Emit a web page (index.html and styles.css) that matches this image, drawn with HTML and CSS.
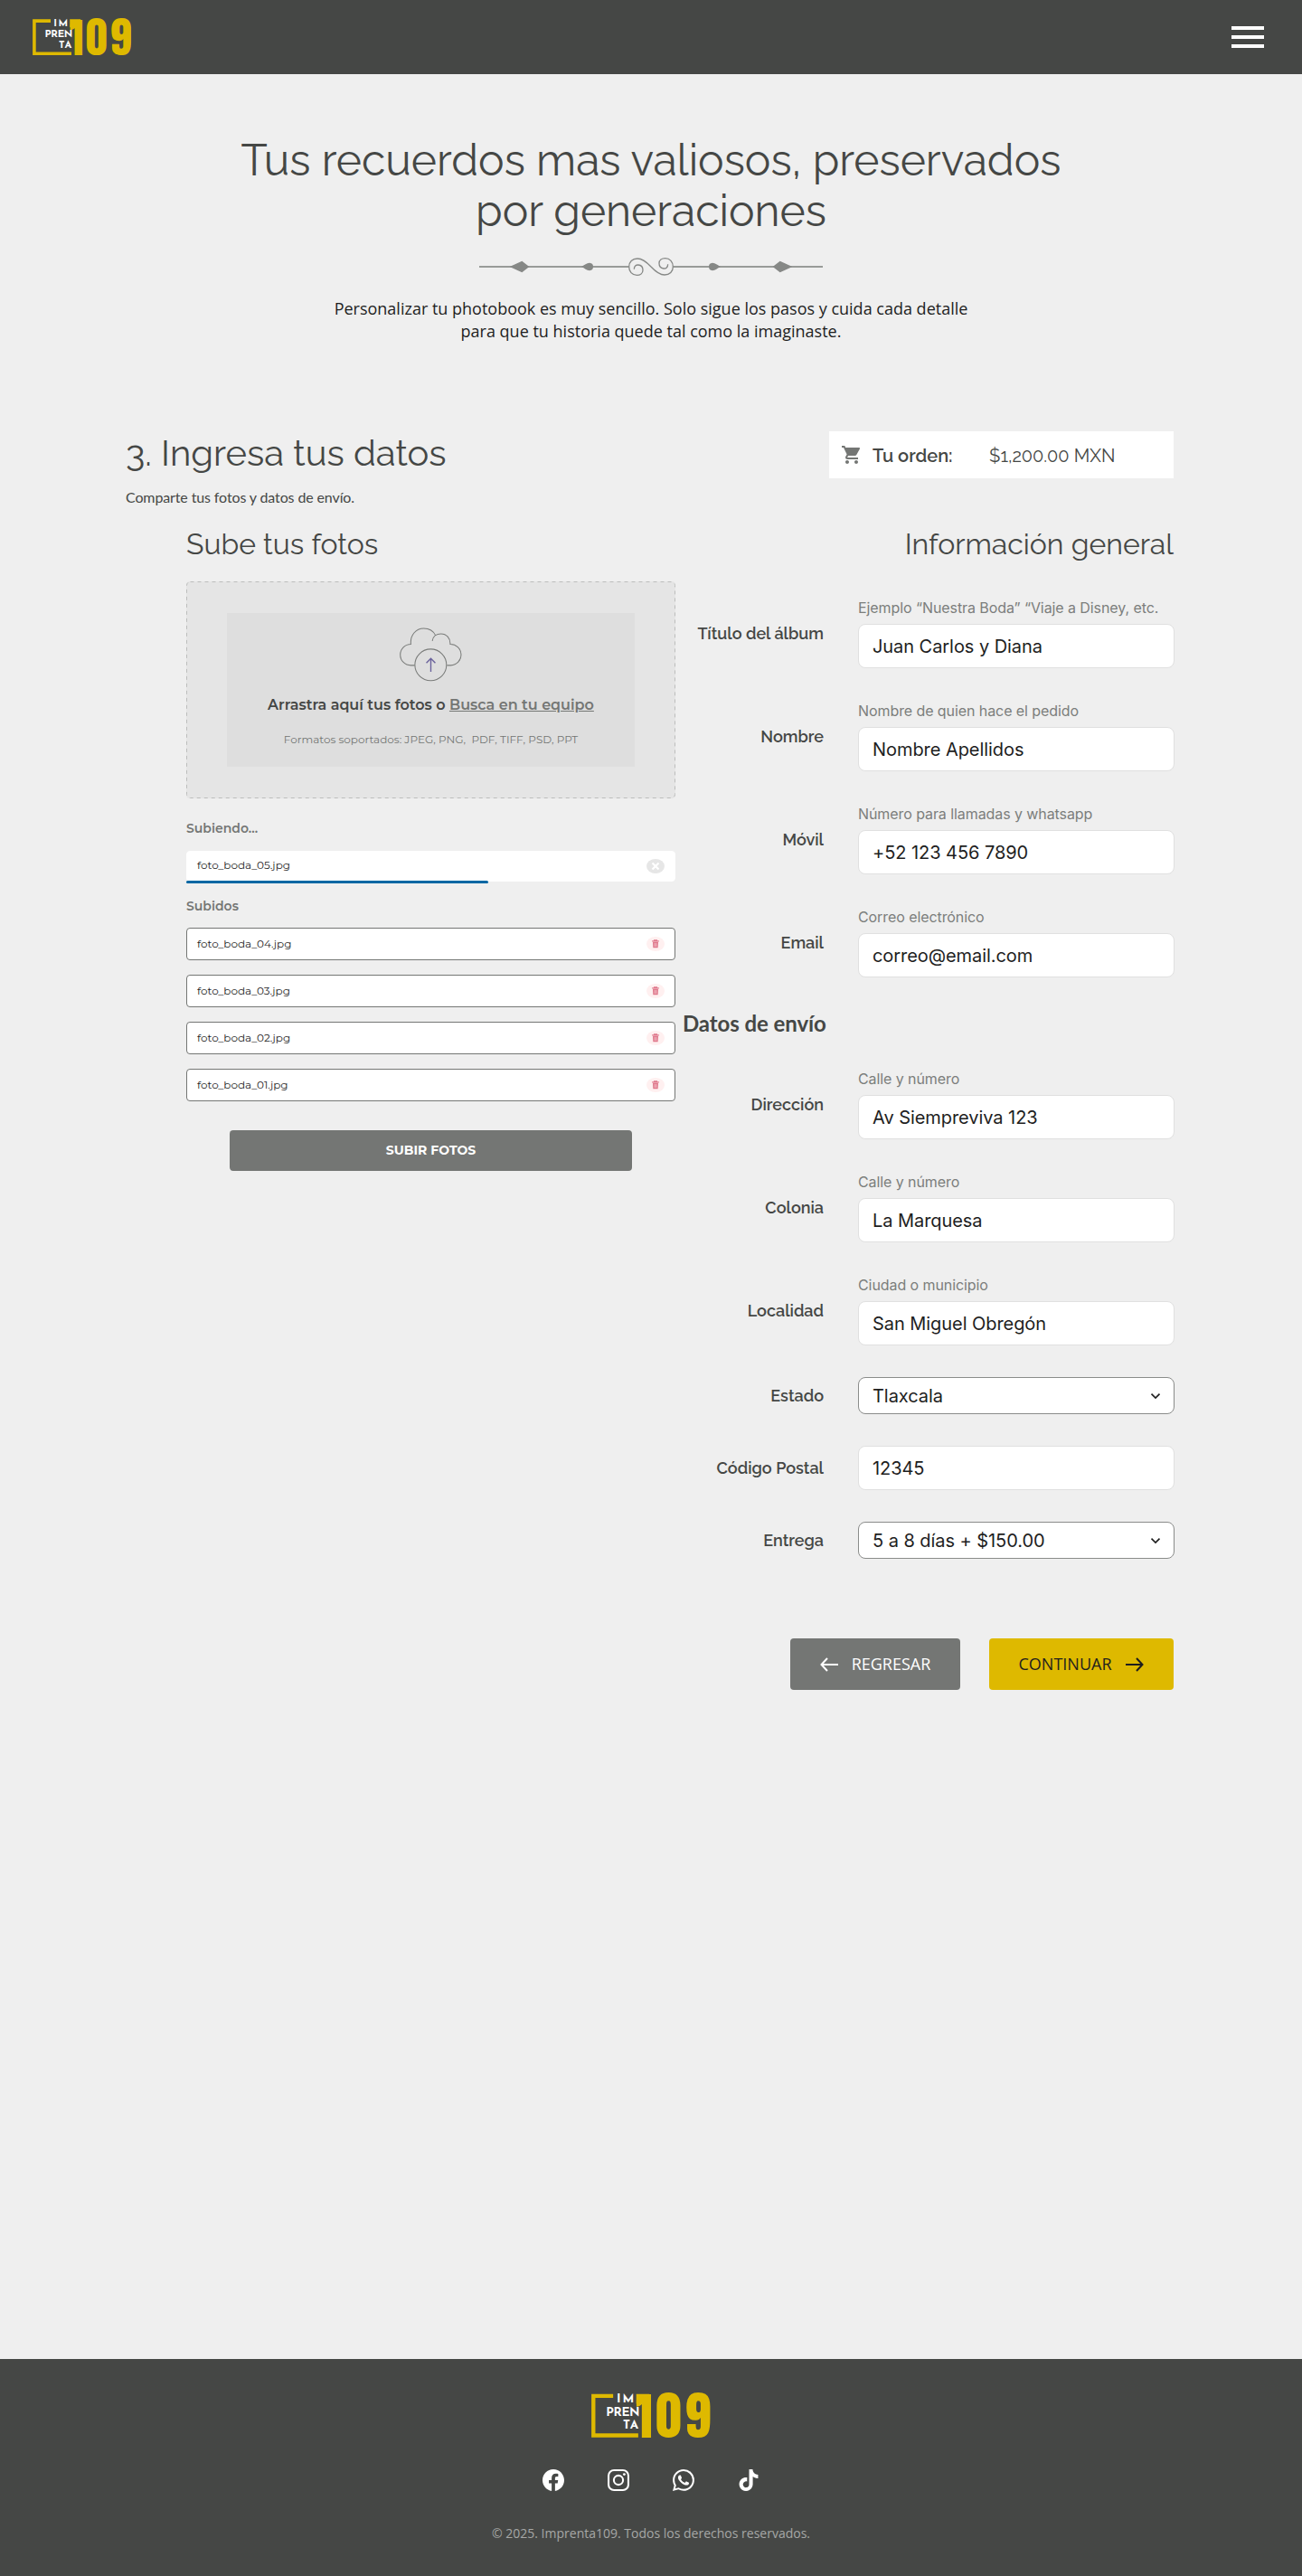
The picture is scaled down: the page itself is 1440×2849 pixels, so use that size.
FILE: index.html
```html
<!DOCTYPE html>
<html lang="es">
<head>
<meta charset="utf-8">
<title>Imprenta109 – Ingresa tus datos</title>
<link rel="stylesheet" href="styles.css">
</head>
<body>
<svg class="defs" width="0" height="0" aria-hidden="true">
  <symbol id="logo" viewBox="0 0 109.4 42">
    <path d="M20 3.1H1.9V39.2H43" fill="none" stroke="#deb900" stroke-width="3.6"/>
    <path d="M41.2 1.3h12v9h-12z" fill="#deb900"/>
    <g class="logo-digits">
      <text class="logo-one" x="40.9" y="41">1</text>
      <text x="59" y="41.4">0</text>
      <text x="86" y="41.4">9</text>
    </g>
    <g class="logo-word">
      <text x="23.2" y="9.4" textLength="16">IM</text>
      <text x="13.4" y="21.4" textLength="31">PREN</text>
      <text x="29.1" y="33.2" textLength="14.2">TA</text>
    </g>
  </symbol>
  <symbol id="trash" viewBox="0 0 20 20">
    <path d="M5.2 6.2h9.6M8.2 6V4.8h3.6V6" fill="none" stroke="#e0788c" stroke-width="1.5"/>
    <path d="M6.2 7.2h7.600l-.5 8.200H6.700z" fill="#e0788c"/>
    <path d="M8.900 8.800v5M11.100 8.800v5" stroke="#fff0f0" stroke-width=".7"/>
  </symbol>
  <symbol id="chevron" viewBox="0 0 12 8">
    <path d="M1.5 1.6L6 6.1l4.5-4.5" fill="none" stroke="#1e1e1e" stroke-width="1.6"/>
  </symbol>
</svg>

<header class="topbar">
  <svg class="logo"><use href="#logo"/></svg>
  <div class="burger"><span></span><span></span><span></span></div>
</header>

<main class="main">
  <section class="hero">
    <h1 class="hero-title">Tus recuerdos mas valiosos, preservados<br>por generaciones</h1>
    <svg class="ornament" viewBox="60 30 1140 90">
      <path d="M60 75H556M704 75H1200" stroke="#999b99" stroke-width="5.5"/>
      <g id="half">
        <path d="M161 75L202 56.500L226 75 202 93.500zM399 75C410 70 416 62.500 426 62.500 435 63 438 68 438 75S435 87 426 87.500C416 87.500 410 80 399 75z" fill="#868886"/>
        <path d="M574 83C574 73 580 68.500 588 69 598 70 603 77 603 86 603 97 594 103 583 103 567 103 557 91 557 75 557 59 568 48 585 48 603 48 616 60 630 75" fill="none" stroke="#868886" stroke-width="4"/>
      </g>
      <use href="#half" transform="rotate(180 630 75)"/>
    </svg>
    <p class="hero-text">Personalizar tu photobook es muy sencillo. Solo sigue los pasos y cuida cada detalle<br>para que tu historia quede tal como la imaginaste.</p>
  </section>

  <section class="step">
    <div class="step-head">
      <h2 class="step-title">3. Ingresa tus datos</h2>
      <div class="order">
        <svg class="order-icon" viewBox="0 0 24 24" fill="#747674"><path d="M7 18c-1.100 0-1.990.9-1.990 2S5.900 22 7 22s2-.9 2-2-.9-2-2-2zM1 2v2h2l3.600 7.590-1.350 2.450c-.16.28-.25.61-.25.96 0 1.100.9 2 2 2h12v-2H7.420c-.14 0-.25-.11-.25-.25l.03-.12.9-1.630h7.450c.75 0 1.410-.41 1.750-1.030l3.580-6.490c.08-.14.12-.31.12-.48 0-.55-.45-1-1-1H5.210l-.94-2H1zm16 16c-1.100 0-1.990.9-1.990 2s.89 2 1.990 2 2-.9 2-2-.9-2-2-2z"/></svg>
        <span class="order-label">Tu orden:</span>
        <span class="order-price">$1,200.00 MXN</span>
      </div>
    </div>
    <p class="step-text">Comparte tus fotos y datos de envío.</p>

    <div class="columns">
      <div class="upload">
        <h3 class="col-title">Sube tus fotos</h3>
        <div class="dropzone">
          <svg class="dropzone-outline"><rect x=".5" y=".5" width="540" height="239" rx="4"/></svg>
          <div class="drop-inner">
            <svg class="cloud" viewBox="36 26 208 182" fill="none" stroke="#7a7c7a" stroke-width="3.200">
              <path d="M86 153H73A35.500 35.500 0 0 1 73 82C70 52 90 29 116 29 133 29 149 38 156 53M145 71C147 56 159 47 174 47 192 47 206 61 205 82A35.500 35.500 0 0 1 207 153H194"/>
              <circle cx="139.500" cy="151.500" r="53"/>
              <path d="M140 175V131M125 145L140 130 155 145" stroke="#6a629c" stroke-width="4.200"/>
            </svg>
            <p class="drop-main">Arrastra aquí tus fotos o <a class="browse">Busca en tu equipo</a></p>
            <p class="drop-formats">Formatos soportados: JPEG, PNG, &nbsp;PDF, TIFF, PSD, PPT</p>
          </div>
        </div>

        <h4 class="list-title">Subiendo...</h4>
        <div class="file file-active">
          <span class="file-name">foto_boda_05.jpg</span>
          <svg class="file-action" viewBox="0 0 20 16"><ellipse cx="10" cy="8" rx="10" ry="8" fill="#e6e6e6"/><path d="M6.500 4.500l7 7M13.500 4.500l-7 7" stroke="#fff" stroke-width="2.200"/></svg>
          <span class="progress" style="width:334px"></span>
        </div>
        <h4 class="list-title list-title-done">Subidos</h4>
        <ul class="files">
          <li class="file"><span class="file-name">foto_boda_04.jpg</span><svg class="file-action trash"><use href="#trash"/></svg></li>
          <li class="file"><span class="file-name">foto_boda_03.jpg</span><svg class="file-action trash"><use href="#trash"/></svg></li>
          <li class="file"><span class="file-name">foto_boda_02.jpg</span><svg class="file-action trash"><use href="#trash"/></svg></li>
          <li class="file"><span class="file-name">foto_boda_01.jpg</span><svg class="file-action trash"><use href="#trash"/></svg></li>
        </ul>
        <div class="upload-btn">SUBIR FOTOS</div>
      </div>

      <div class="form">
        <h3 class="col-title col-title-right">Información general</h3>
        <div class="fields">
          <div class="field"><span class="label">Título del álbum</span><div class="control"><span class="hint">Ejemplo “Nuestra Boda” “Viaje a Disney, etc.</span><div class="input">Juan Carlos y Diana</div></div></div>
          <div class="field"><span class="label">Nombre</span><div class="control"><span class="hint">Nombre de quien hace el pedido</span><div class="input">Nombre Apellidos</div></div></div>
          <div class="field"><span class="label">Móvil</span><div class="control"><span class="hint">Número para llamadas y whatsapp</span><div class="input">+52 123 456 7890</div></div></div>
          <div class="field"><span class="label">Email</span><div class="control"><span class="hint">Correo electrónico</span><div class="input">correo@email.com</div></div></div>
        </div>
        <h4 class="form-title">Datos de envío</h4>
        <div class="fields fields-address">
          <div class="field"><span class="label">Dirección</span><div class="control"><span class="hint">Calle y número</span><div class="input">Av Siempreviva 123</div></div></div>
          <div class="field"><span class="label">Colonia</span><div class="control"><span class="hint">Calle y número</span><div class="input">La Marquesa</div></div></div>
          <div class="field"><span class="label">Localidad</span><div class="control"><span class="hint">Ciudad o municipio</span><div class="input">San Miguel Obregón</div></div></div>
        </div>
        <div class="fields fields-short">
          <div class="field"><span class="label">Estado</span><div class="control"><div class="input select">Tlaxcala<svg class="chevron"><use href="#chevron"/></svg></div></div></div>
          <div class="field"><span class="label">Código Postal</span><div class="control"><div class="input">12345</div></div></div>
          <div class="field"><span class="label">Entrega</span><div class="control"><div class="input select">5 a 8 días + $150.00<svg class="chevron"><use href="#chevron"/></svg></div></div></div>
        </div>
        <div class="actions">
          <div class="btn btn-back"><svg class="arrow" viewBox="0 0 20 16"><path d="M20 8H1.500M8 1L1.500 8 8 15" fill="none" stroke="currentColor" stroke-width="2"/></svg>REGRESAR</div>
          <div class="btn btn-next">CONTINUAR<svg class="arrow" viewBox="0 0 20 16"><path d="M0 8H18.500M12 1L18.500 8 12 15" fill="none" stroke="currentColor" stroke-width="2"/></svg></div>
        </div>
      </div>
    </div>
  </section>
</main>

<footer class="footer">
  <svg class="footer-logo"><use href="#logo"/></svg>
  <div class="social">
    <svg viewBox="0 0 16 16" fill="#fff"><path d="M16 8.049c0-4.446-3.582-8.050-8-8.050C3.580 0-.002 3.603-.002 8.050c0 4.017 2.926 7.347 6.750 7.951v-5.625h-2.030V8.050H6.750V6.275c0-2.017 1.195-3.131 3.022-3.131.876 0 1.791.157 1.791.157v1.980h-1.009c-.993 0-1.303.621-1.303 1.258v1.510h2.218l-.354 2.326H9.250V16c3.824-.604 6.750-3.934 6.750-7.951"/></svg>
    <svg viewBox="0 0 24 24" fill="none" stroke="#fff" stroke-width="2.100"><rect x="1.050" y="1.050" width="21.900" height="21.900" rx="6"/><circle cx="12" cy="12" r="5.100"/><circle cx="18.400" cy="5.600" r="1.450" fill="#fff" stroke="none"/></svg>
    <svg viewBox="0 0 16 16" fill="#fff"><path d="M13.601 2.326A7.850 7.850 0 0 0 7.994 0C3.627 0 .068 3.558.064 7.926c0 1.399.366 2.760 1.057 3.965L0 16l4.204-1.102a7.900 7.900 0 0 0 3.790.965h.004c4.368 0 7.926-3.558 7.930-7.930A7.900 7.900 0 0 0 13.600 2.326zM7.994 14.521a6.600 6.600 0 0 1-3.356-.92l-.24-.144-2.494.654.666-2.433-.156-.251a6.560 6.560 0 0 1-1.007-3.505c0-3.626 2.957-6.584 6.591-6.584a6.560 6.560 0 0 1 4.660 1.931 6.560 6.560 0 0 1 1.928 4.660c-.004 3.639-2.961 6.592-6.592 6.592m3.615-4.934c-.197-.099-1.170-.578-1.353-.646-.182-.065-.315-.099-.445.099-.133.197-.513.646-.627.775-.114.133-.232.148-.43.050-.197-.1-.836-.308-1.592-.985-.59-.525-.985-1.175-1.103-1.372-.114-.198-.011-.304.088-.403.087-.088.197-.232.296-.346.1-.114.133-.198.198-.33.065-.134.034-.248-.015-.347-.05-.099-.445-1.076-.612-1.470-.16-.389-.323-.335-.445-.34-.114-.007-.247-.007-.38-.007a.73.73 0 0 0-.529.247c-.182.198-.691.677-.691 1.654s.71 1.916.81 2.049c.098.133 1.394 2.132 3.383 2.992.47.205.84.326 1.129.418.475.152.904.129 1.246.080.38-.058 1.171-.48 1.338-.943.164-.464.164-.86.114-.943-.049-.084-.182-.133-.38-.232"/></svg>
    <svg viewBox="0 0 24 24" fill="#fff"><path d="M12.525.02c1.310-.02 2.610-.01 3.910-.02.08 1.530.63 3.090 1.750 4.170 1.120 1.110 2.700 1.620 4.240 1.790v4.030c-1.440-.05-2.890-.35-4.200-.97-.57-.26-1.100-.59-1.620-.93-.01 2.920.01 5.840-.02 8.750-.08 1.400-.54 2.790-1.350 3.940-1.310 1.920-3.580 3.170-5.910 3.210-1.430.08-2.860-.31-4.080-1.030-2.020-1.190-3.440-3.370-3.650-5.710-.02-.5-.03-1-.01-1.490.18-1.900 1.120-3.720 2.580-4.960 1.660-1.440 3.980-2.130 6.150-1.720.02 1.480-.04 2.960-.04 4.440-.99-.32-2.150-.23-3.020.37-.63.41-1.110 1.040-1.360 1.750-.21.51-.15 1.070-.14 1.610.24 1.640 1.820 3.020 3.500 2.870 1.120-.01 2.190-.66 2.770-1.610.19-.33.4-.67.41-1.060.1-1.790.06-3.570.07-5.360.01-4.030-.01-8.050.02-12.070z"/></svg>
  </div>
  <p class="copyright">© 2025. Imprenta109. Todos los derechos reservados.</p>
</footer>
</body>
</html>
```
FILE: styles.css
```css
* { box-sizing: border-box; margin: 0; padding: 0; }
body {
  width: 1440px;
  background: #efefef;
  color: #454745;
  font-family: "Raleway", "Lato", sans-serif;
}
.defs { position: absolute; }
.logo-digits text { font: 400 47.5px "Anton", "Roboto", sans-serif; fill: #deb900; }
.logo-digits .logo-one { font-size: 46.2px; }
.logo-word text { font: 700 11.2px "Josefin Sans", "Lato", sans-serif; fill: #fff; }

.topbar {
  display: flex;
  justify-content: space-between;
  align-items: center;
  height: 82px;
  padding: 0 42px 0 36px;
  background: #454745;
}
.logo { width: 109.4px; height: 42px; overflow: visible; }
.burger { display: flex; flex-direction: column; gap: 6px; width: 36px; }
.burger span { height: 4px; background: #fff; }

.main { height: 2527px; }
.hero { display: flex; flex-direction: column; align-items: center; padding-top: 67px; text-align: center; }
.hero-title { font-weight: 400; font-size: 48px; line-height: 56px; }
.ornament { width: 380px; height: 30px; margin-top: 19px; }
.hero-text { margin-top: 19px; font: 400 18px/25px "Open Sans", sans-serif; color: #1e1e1e; }

.step { padding: 98px 142px 0 139px; }
.step-head { display: flex; justify-content: space-between; align-items: flex-start; height: 63px; }
.step-title { padding-top: 1px; font-weight: 400; font-size: 40px; line-height: 46px; }
.order {
  display: grid;
  grid-template-columns: 35px 129px 1fr;
  align-items: center;
  width: 381px;
  height: 52px;
  padding-left: 13px;
  background: #fff;
  font-size: 20px;
  line-height: 24px;
}
.order-icon { width: 24px; height: 24px; }
.order-label { font-weight: 600; }
.order-label, .order-price { padding-top: 1px; }
.step-text { font: 400 16px/19px "Lato", sans-serif; letter-spacing: -.12px; }

.columns { display: flex; gap: 8px; margin-top: 24px; }
.upload { width: 541px; margin-left: 67px; }
.form { width: 543px; }
.col-title { font-weight: 400; font-size: 32px; line-height: 37px; }
.col-title-right { text-align: right; }

.dropzone {
  position: relative;
  height: 240px;
  margin-top: 23px;
  padding: 35px 45px;
  border-radius: 4px;
  background: #e5e5e5;
}
.dropzone-outline { position: absolute; inset: 0; width: 541px; height: 240px; }
.dropzone-outline rect { fill: none; stroke: #bcbdbc; stroke-dasharray: 4 4; }
.drop-inner {
  display: flex;
  flex-direction: column;
  align-items: center;
  height: 170px;
  padding-top: 16px;
  background: #dedede;
  font-family: "Montserrat", "Inter", sans-serif;
}
.cloud { width: 69px; height: 60px; }
.drop-main { margin-top: 16px; font-weight: 600; font-size: 16px; line-height: 20px; }
.browse { color: #747674; text-decoration: underline; }
.drop-formats { margin-top: 20px; font-size: 12px; line-height: 15px; color: #747674; }

.list-title { margin-top: 25px; font: 600 14px/17px "Montserrat", "Inter", sans-serif; color: #747674; }
.list-title-done { margin-top: 19px; }
.files { display: grid; gap: 16px; margin-top: 15px; list-style: none; }
.file {
  display: flex;
  justify-content: space-between;
  align-items: center;
  height: 36px;
  padding: 0 11px;
  border: 1px solid #747674;
  border-radius: 4px;
  background: #fff;
}
.file-active { position: relative; height: 34px; margin-top: 16px; border-color: #fff; }
.file-active .file-name { padding-bottom: 2px; }
.progress { position: absolute; left: -1px; bottom: -3px; height: 3px; border-radius: 2px; background: #0067a3; }
.file-name { font: 400 12px/16px "Montserrat", "Inter", sans-serif; color: #1e1e1e; }
.file-action { width: 20px; height: 16px; }
.trash { border-radius: 50%; background: #fff0f0; }
.upload-btn {
  width: 445px;
  height: 45px;
  margin: 32px 0 0 48px;
  border-radius: 4px;
  background: #747674;
  color: #fff;
  text-align: center;
  font: 700 14px/45px "Montserrat", "Inter", sans-serif;
}

.fields { display: grid; gap: 37px; margin: 42px -1px 0 0; }
.fields-address { margin-top: 37px; }
.fields-short { gap: 35px; margin-top: 35px; }
.field { display: flex; justify-content: flex-end; align-items: center; gap: 38px; }
.label { font-weight: 600; font-size: 18px; line-height: 22px; }
.control { width: 350px; }
.hint {
  display: block;
  margin-bottom: 8px;
  font: 400 16px/20px "Inter", sans-serif;
  letter-spacing: -.08px;
  color: #7c7e7c;
}
.input {
  display: flex;
  justify-content: space-between;
  align-items: center;
  height: 49px;
  padding: 0 15px;
  border: 1px solid #e0e0e0;
  border-radius: 8px;
  background: #fff;
  font: 400 20px/24px "Inter", sans-serif;
  letter-spacing: -.06px;
  color: #1e1e1e;
}
.select { height: 41px; border-color: #8a8c8a; }
.chevron { width: 12px; height: 8px; margin-right: -1px; }
.form-title { margin-top: 36px; font: 700 24px/29px "Lato", sans-serif; letter-spacing: -.08px; }

.actions { display: flex; justify-content: flex-end; gap: 32px; margin-top: 88px; }
.btn {
  display: flex;
  align-items: center;
  justify-content: center;
  gap: 15px;
  height: 57px;
  border-radius: 4px;
  font: 400 18px/25px "Open Sans", sans-serif;
}
.btn-back { width: 188px; background: #747674; color: #fff; }
.btn-next { width: 204px; padding-right: 1px; background: #deb900; color: #1e1e1e; }
.arrow { width: 20px; height: 16px; }

.footer {
  display: flex;
  flex-direction: column;
  align-items: center;
  height: 240px;
  padding-top: 37px;
  background: #454745;
}
.footer-logo { width: 132px; height: 51px; overflow: visible; }
.social { display: flex; gap: 48px; margin-top: 34px; }
.social svg { width: 24px; height: 24px; }
.copyright { margin-top: 37px; font: 400 14px/19px "Open Sans", sans-serif; color: #a6a7a6; }
```
